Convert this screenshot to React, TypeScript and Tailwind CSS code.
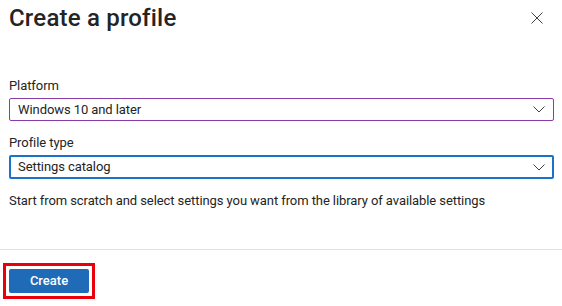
const FONT = "font-['Roboto','Segoe_UI',sans-serif]"

function Chevron() {
  return (
    <svg width="12" height="7" viewBox="0 0 12 7" fill="none" aria-hidden="true">
      <path d="M0.5 0.5L6 6L11.5 0.5" stroke="#424242" strokeWidth="1" />
    </svg>
  )
}

function CloseIcon() {
  return (
    <svg width="12" height="12" viewBox="0 0 12 12" fill="none" aria-hidden="true">
      <path d="M0.5 0.5L11.5 11.5M11.5 0.5L0.5 11.5" stroke="#424242" strokeWidth="1" />
    </svg>
  )
}

type SelectProps = {
  value: string
  focused?: boolean
}

function FakeSelect({ value, focused }: SelectProps) {
  return (
    <div
      className={
        focused
          ? "flex h-[24px] items-center justify-between rounded-[2px] border-2 border-[#1a73c8] pl-[7px] pr-[7px]"
          : "flex h-[23px] items-center justify-between rounded-[2px] border border-[#8b3ba6] pl-[8px] pr-[8px]"
      }
    >
      <span className="text-[13px] leading-[20px] tracking-[-0.08px] text-[#242424]">{value}</span>
      <Chevron />
    </div>
  )
}

export default function App() {
  return (
    <div className={`${FONT} h-[306px] w-[562px] overflow-hidden bg-white text-[#242424]`}>
      {/* Header */}
      <div className="flex items-start justify-between pl-[9px] pr-[18px] pt-[2px]">
        <h1 className="text-[24px] font-medium leading-[32px] tracking-[0.2px] text-[#242424]">Create a profile</h1>
        <button className="mt-[9px] flex h-[14px] w-[14px] items-center justify-center">
          <CloseIcon />
        </button>
      </div>

      {/* Form */}
      <div className="flex flex-col px-[9px] pr-[8px] pt-[42px]">
        <label className="text-[13px] leading-[20px] tracking-[-0.08px]">Platform</label>
        <div className="mt-[2px]">
          <FakeSelect value="Windows 10 and later" />
        </div>

        <label className="mt-[12px] text-[13px] leading-[20px] tracking-[-0.08px]">Profile type</label>
        <div className="mt-[2px]">
          <FakeSelect value="Settings catalog" focused />
        </div>

        <p className="mt-[12px] text-[13px] leading-[20px] tracking-[-0.08px] text-[#242424]">
          Start from scratch and select settings you want from the library of available settings
        </p>
      </div>

      {/* Footer */}
      <div className="mt-[38px] h-px w-full bg-[#e0e0e0]" />
      <div className="pl-[3px] pt-[13px]">
        <div className="inline-flex border-[3px] border-[#e8000b] p-[3px]">
          <button className="h-[24px] w-[80px] rounded-[2px] bg-[#1f6bb8] text-[13px] font-medium leading-[20px] text-white">
            Create
          </button>
        </div>
      </div>
    </div>
  )
}
